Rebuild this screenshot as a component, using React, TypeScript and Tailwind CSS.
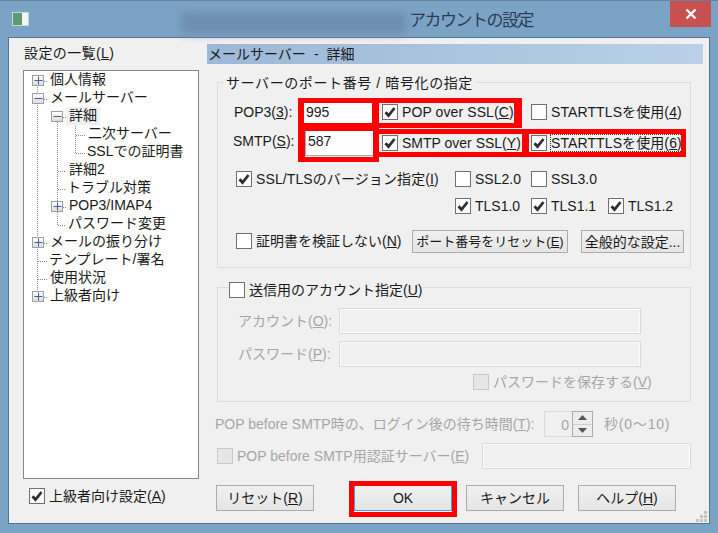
import React from 'react';

const FONT = 'font-["Liberation_Sans","Noto_Sans_CJK_JP",sans-serif]';

// check mark used by every ticked box
const Tick = () => (
  <svg width="14" height="14" viewBox="0 0 14 14" className="block">
    <path d="M2.5 7.2 L5.5 10.5 L11.5 3" fill="none" stroke="#2f2f2f" strokeWidth="2.8" />
  </svg>
);

const Box = ({ checked = false, disabled = false }: { checked?: boolean; disabled?: boolean }) => (
  <span
    className={`flex h-[16px] w-[16px] shrink-0 items-center justify-center border ${
      disabled ? 'border-[#c8c8c8] bg-[#e6e6e6]' : 'border-[#707070] bg-white'
    }`}
  >
    {checked && <Tick />}
  </span>
);

const Check = ({
  checked,
  disabled,
  className = '',
  children,
}: {
  checked?: boolean;
  disabled?: boolean;
  className?: string;
  children: React.ReactNode;
}) => (
  <label className={`flex h-[16px] items-center gap-[4px] whitespace-nowrap ${className}`}>
    <Box checked={checked} disabled={disabled} />
    <span className={disabled ? 'text-[#a6a6a6]' : ''}>{children}</span>
  </label>
);

const Btn = ({ className = '', children }: { className?: string; children: React.ReactNode }) => (
  <button className={`flex shrink-0 items-center justify-center whitespace-nowrap border bg-gradient-to-b from-[#f0f0f0] to-[#e5e5e5] ${className}`}>
    {children}
  </button>
);

const Field = ({ className = '' }: { className?: string }) => (
  <div className={`h-[26px] shrink-0 border border-[#d9d9d9] bg-[#f0f0f0] shadow-[inset_0_0_0_1px_#fbfbfb] ${className}`} />
);

type TreeRow = { label: string; toggle?: string; tg?: string; indent?: string; selected?: boolean };

const treeRows: TreeRow[] = [
  { label: '個人情報', toggle: '+', tg: 'ml-[8px]' },
  { label: 'メールサーバー', toggle: '-', tg: 'ml-[8px]' },
  { label: '詳細', toggle: '-', tg: 'ml-[27px]', selected: true },
  { label: '二次サーバー', indent: 'ml-[64px]' },
  { label: 'SSLでの証明書', indent: 'ml-[63px]' },
  { label: '詳細2', indent: 'ml-[45px]' },
  { label: 'トラブル対策', indent: 'ml-[43px]' },
  { label: 'POP3/IMAP4', toggle: '+', tg: 'ml-[27px]' },
  { label: 'パスワード変更', indent: 'ml-[44px]' },
  { label: 'メールの振り分け', toggle: '+', tg: 'ml-[8px]' },
  { label: 'テンプレート/署名', indent: 'ml-[25px]' },
  { label: '使用状況', indent: 'ml-[26px]' },
  { label: '上級者向け', toggle: '+', tg: 'ml-[8px]' },
];

const Toggle = ({ kind }: { kind: string }) => (
  <span className="relative z-10 flex h-[11px] w-[12px] shrink-0 items-center justify-center border border-[#a0a0a0] bg-gradient-to-b from-[#ffffff] to-[#dcdcdc]">
    <svg width="9" height="9" viewBox="0 0 9 9" className="block">
      <path d={kind === '+' ? 'M0.5 4.5H8.5M4.5 0.5V8.5' : 'M0.5 4.5H8.5'} stroke="#3f5f9f" />
    </svg>
  </span>
);

// dotted connectors of the tree
const TreeLines = () => (
  <svg className="absolute left-0 top-0" width="174" height="240">
    <g stroke="#8a8a8a" strokeDasharray="1 1" fill="none">
      <path d="M13.5 14V226M33.5 47V154M51.5 55V82" />
      <path d="M20 10.5H23M20 28.5H23M39 46.5H42M52 64.5H61M52 82.5H61M34 100.5H42M34 118.5H42M39 136.5H42M34 154.5H42M20 172.5H23M14 190.5H23M14 208.5H23M20 226.5H23" />
    </g>
  </svg>
);

export default function App() {
  return (
    <div className={`relative flex h-[533px] w-[718px] flex-col overflow-hidden border-t border-[#64839f] bg-[#7ba3c6] text-[14px] leading-none text-[#1a1a1a] ${FONT}`}>
      {/* title bar */}
      <div className="flex h-[36px] shrink-0">
        <div className="ml-[12px] mt-[11px] flex h-[14px] w-[17px] shrink-0 border border-[#c8d4dc] bg-[#f4f6f6]">
          <div className="h-full w-[9px] bg-gradient-to-br from-[#4f9a8c] to-[#6a9a50]" />
        </div>
        <div className="ml-[152px] mt-[11px] h-[22px] w-[226px] shrink-0 rounded-sm bg-[#6e8fae] blur-[4px]" />
        <div className="ml-[2px] mt-[11px] w-[125px] shrink-0 whitespace-nowrap text-[17px] tracking-[-1.5px] text-[#2b3d50]">アカウントの設定</div>
        <div className="ml-[136px] flex h-[26px] w-[41px] shrink-0 items-center justify-center bg-[#c75050]">
          <svg width="12" height="12" viewBox="0 0 12 12">
            <path d="M1.5 1.5L10.5 10.5M10.5 1.5L1.5 10.5" stroke="#fff" strokeWidth="2.4" />
          </svg>
        </div>
      </div>

      {/* dialog body */}
      <div className="ml-[8px] flex h-[487px] w-[702px] shrink-0 border border-[#55748f] bg-[#f0f0f0]">
        {/* left column */}
        <div className="flex w-[198px] shrink-0 flex-col pl-[14px]">
          <div className="mt-[8px] h-[15px] pl-[1px] tracking-[0.4px]">
            設定の一覧(<u>L</u>)
          </div>
          <div className="relative mt-[9px] h-[409px] w-[176px] border border-[#828790] bg-white">
            <TreeLines />
            <div className="relative flex flex-col">
              {treeRows.map((r) => (
                <div key={r.label} className={`flex h-[18px] items-center ${r.indent ?? ''}`}>
                  {r.toggle && (
                    <span className={r.tg}>
                      <Toggle kind={r.toggle} />
                    </span>
                  )}
                  {r.selected ? (
                    <span className="ml-[3px] flex h-[18px] items-center bg-[#f0f0f0] px-[3px] pb-[2px]">{r.label}</span>
                  ) : (
                    <span className={`whitespace-nowrap pb-[2px] ${r.toggle ? 'ml-[6px]' : ''}`}>{r.label}</span>
                  )}
                </div>
              ))}
            </div>
          </div>
          <Check checked className="ml-[6px] mt-[9px]">
            上級者向け設定(<u>A</u>)
          </Check>
        </div>

        {/* right column */}
        <div className="flex w-[496px] shrink-0 flex-col">
          <div className="mt-[6px] flex h-[20px] items-center bg-gradient-to-r from-[#9cb8d6] to-[#b9d0e8] pl-[1px]">
            メールサーバー<span className="px-[8px]">-</span>詳細
          </div>

          {/* port group */}
          <div className="relative ml-[10px] mt-[18px] h-[186px] w-[474px] border border-[#dcdcdc] pt-[18px]">
            <div className="absolute left-[6px] top-[-7px] bg-[#f0f0f0] px-[2px] tracking-[0.6px]">サーバーのポート番号 / 暗号化の指定</div>
            <div className="flex h-[26px] items-center pl-[16px]">
              <span className="w-[70px] shrink-0 pb-[5px]">POP3(<u>3</u>):</span>
              <div className="flex h-[26px] w-[68px] shrink-0 items-center bg-white pb-[5px] pl-[2px]">995</div>
              <Check checked className="mb-[4px] ml-[10px] w-[149px] shrink-0 tracking-[0.1px]">POP over SSL(<u>C</u>)</Check>
              <Check className="mb-[4px] tracking-[0.1px]">STARTTLSを使用(<u>4</u>)</Check>
            </div>
            <div className="mt-[3px] flex h-[26px] items-center pl-[15px]">
              <span className="w-[72px] shrink-0 pb-[4px]">SMTP(<u>S</u>):</span>
              <div className="flex h-[26px] w-[68px] shrink-0 items-center border-b border-l border-[#acacac] bg-white pb-[4px] pl-[2px]">587</div>
              <Check checked className="ml-[9px] w-[149px] shrink-0">SMTP over SSL(<u>Y</u>)</Check>
              <Check checked className="tracking-[0.1px]"><span className="outline-1 outline-dotted outline-[#333]">STARTTLSを使用(<u>6</u>)</span></Check>
            </div>
            <div className="mt-[15px] flex pl-[18px]">
              <Check checked className="w-[219px] shrink-0 tracking-[0.1px]">SSL/TLSのバージョン指定(<u>I</u>)</Check>
              <Check className="w-[76px] shrink-0">SSL2.0</Check>
              <Check>SSL3.0</Check>
            </div>
            <div className="mt-[11px] flex pl-[237px]">
              <Check checked className="w-[76px] shrink-0">TLS1.0</Check>
              <Check checked className="w-[77px] shrink-0">TLS1.1</Check>
              <Check checked>TLS1.2</Check>
            </div>
            <div className="mt-[16px] flex pl-[18px]">
              <Check className="mt-[3px] w-[176px] shrink-0">証明書を検証しない(<u>N</u>)</Check>
              <Btn className="h-[23px] w-[156px] border-[#acacac] text-[13px]">ポート番号をリセット(<u>E</u>)</Btn>
              <Btn className="ml-[13px] h-[23px] w-[103px] border-[#acacac]">全般的な設定...</Btn>
            </div>
          </div>

          {/* outgoing account group */}
          <div className="relative ml-[10px] mt-[19px] h-[115px] w-[474px] border border-[#dcdcdc] pl-[20px] pt-[20px]">
            <div className="absolute left-[10px] top-[-6px] bg-[#f0f0f0] px-[1px]">
              <Check>送信用のアカウント指定(<u>U</u>)</Check>
            </div>
            <div className="flex items-center text-[#a6a6a6]">
              <span className="w-[101px] shrink-0">アカウント(<u>O</u>):</span>
              <Field className="w-[302px]" />
            </div>
            <div className="mt-[7px] flex items-center text-[#a6a6a6]">
              <span className="w-[101px] shrink-0">パスワード(<u>P</u>):</span>
              <Field className="w-[302px]" />
            </div>
            <Check disabled className="ml-[235px] mt-[7px]">パスワードを保存する(<u>V</u>)</Check>
          </div>

          <div className="ml-[8px] mt-[9px] flex h-[26px] items-center text-[#a6a6a6]">
            <span className="w-[329px] shrink-0 whitespace-nowrap">POP before SMTP時の、ログイン後の待ち時間(<u>T</u>):</span>
            <div className="flex h-[26px] w-[49px] shrink-0">
              <span className="flex-1 border-y border-l border-[#d9d9d9] pr-[3px] pt-[6px] text-right">0</span>
              <div className="flex w-[21px] flex-col border border-[#acacac]">
                <span className="flex flex-1 items-center justify-center border-b border-[#d0d0d0] bg-[#ececec]">
                  <svg width="9" height="5" viewBox="0 0 9 5"><path d="M4.5 0L9 5H0Z" fill="#555" /></svg>
                </span>
                <span className="flex flex-1 items-center justify-center bg-[#ececec]">
                  <svg width="9" height="5" viewBox="0 0 9 5"><path d="M0 0H9L4.5 5Z" fill="#555" /></svg>
                </span>
              </div>
            </div>
            <span className="ml-[11px] whitespace-nowrap tracking-[0.8px]">秒(0～10)</span>
          </div>

          <div className="ml-[10px] mt-[6px] flex h-[26px] items-center">
            <Check disabled className="w-[265px] shrink-0">POP before SMTP用認証サーバー(<u>E</u>)</Check>
            <Field className="w-[209px]" />
          </div>

          <div className="ml-[9px] mt-[16px] flex">
            <Btn className="h-[26px] w-[98px] border-[#acacac]">リセット(<u>R</u>)</Btn>
            <Btn className="ml-[40px] h-[26px] w-[98px] border-[#4a9ee0]">OK</Btn>
            <Btn className="ml-[14px] h-[26px] w-[98px] border-[#acacac]">キャンセル</Btn>
            <Btn className="ml-[14px] h-[26px] w-[98px] border-[#acacac]">ヘルプ(<u>H</u>)</Btn>
          </div>
        </div>
      </div>

      {/* size grip */}
      <svg className="absolute left-[695px] top-[510px]" width="12" height="12" viewBox="0 0 12 12">
        <path d="M9 0h3v3H9zM5 4h3v3H5zM9 4h3v3H9zM1 8h3v3H1zM5 8h3v3H5zM9 8h3v3H9z" fill="#c4c4c4" />
      </svg>

      {/* red annotation boxes drawn on top of the screenshot */}
      <div className="absolute left-[298px] top-[97px] h-[30px] w-[81px] border-y-[5px] border-l-[6px] border-r-[7px] border-[#ff0000]" />
      <div className="absolute left-[298px] top-[125px] h-[36px] w-[81px] border-y-[5px] border-l-[7px] border-r-[6px] border-[#ff0000]" />
      <div className="absolute left-[378px] top-[97px] h-[30px] w-[144px] border-y-[5px] border-r-[8px] border-[#ff0000]" />
      <div className="absolute left-[378px] top-[128px] h-[28px] w-[151px] border-y-[5px] border-r-[7px] border-[#ff0000]" />
      <div className="absolute left-[529px] top-[128px] h-[28px] w-[157px] border-y-[5px] border-r-[5px] border-[#ff0000]" />
      <div className="absolute left-[349px] top-[480px] h-[36px] w-[108px] border-[5px] border-[#ff0000]" />
    </div>
  );
}
